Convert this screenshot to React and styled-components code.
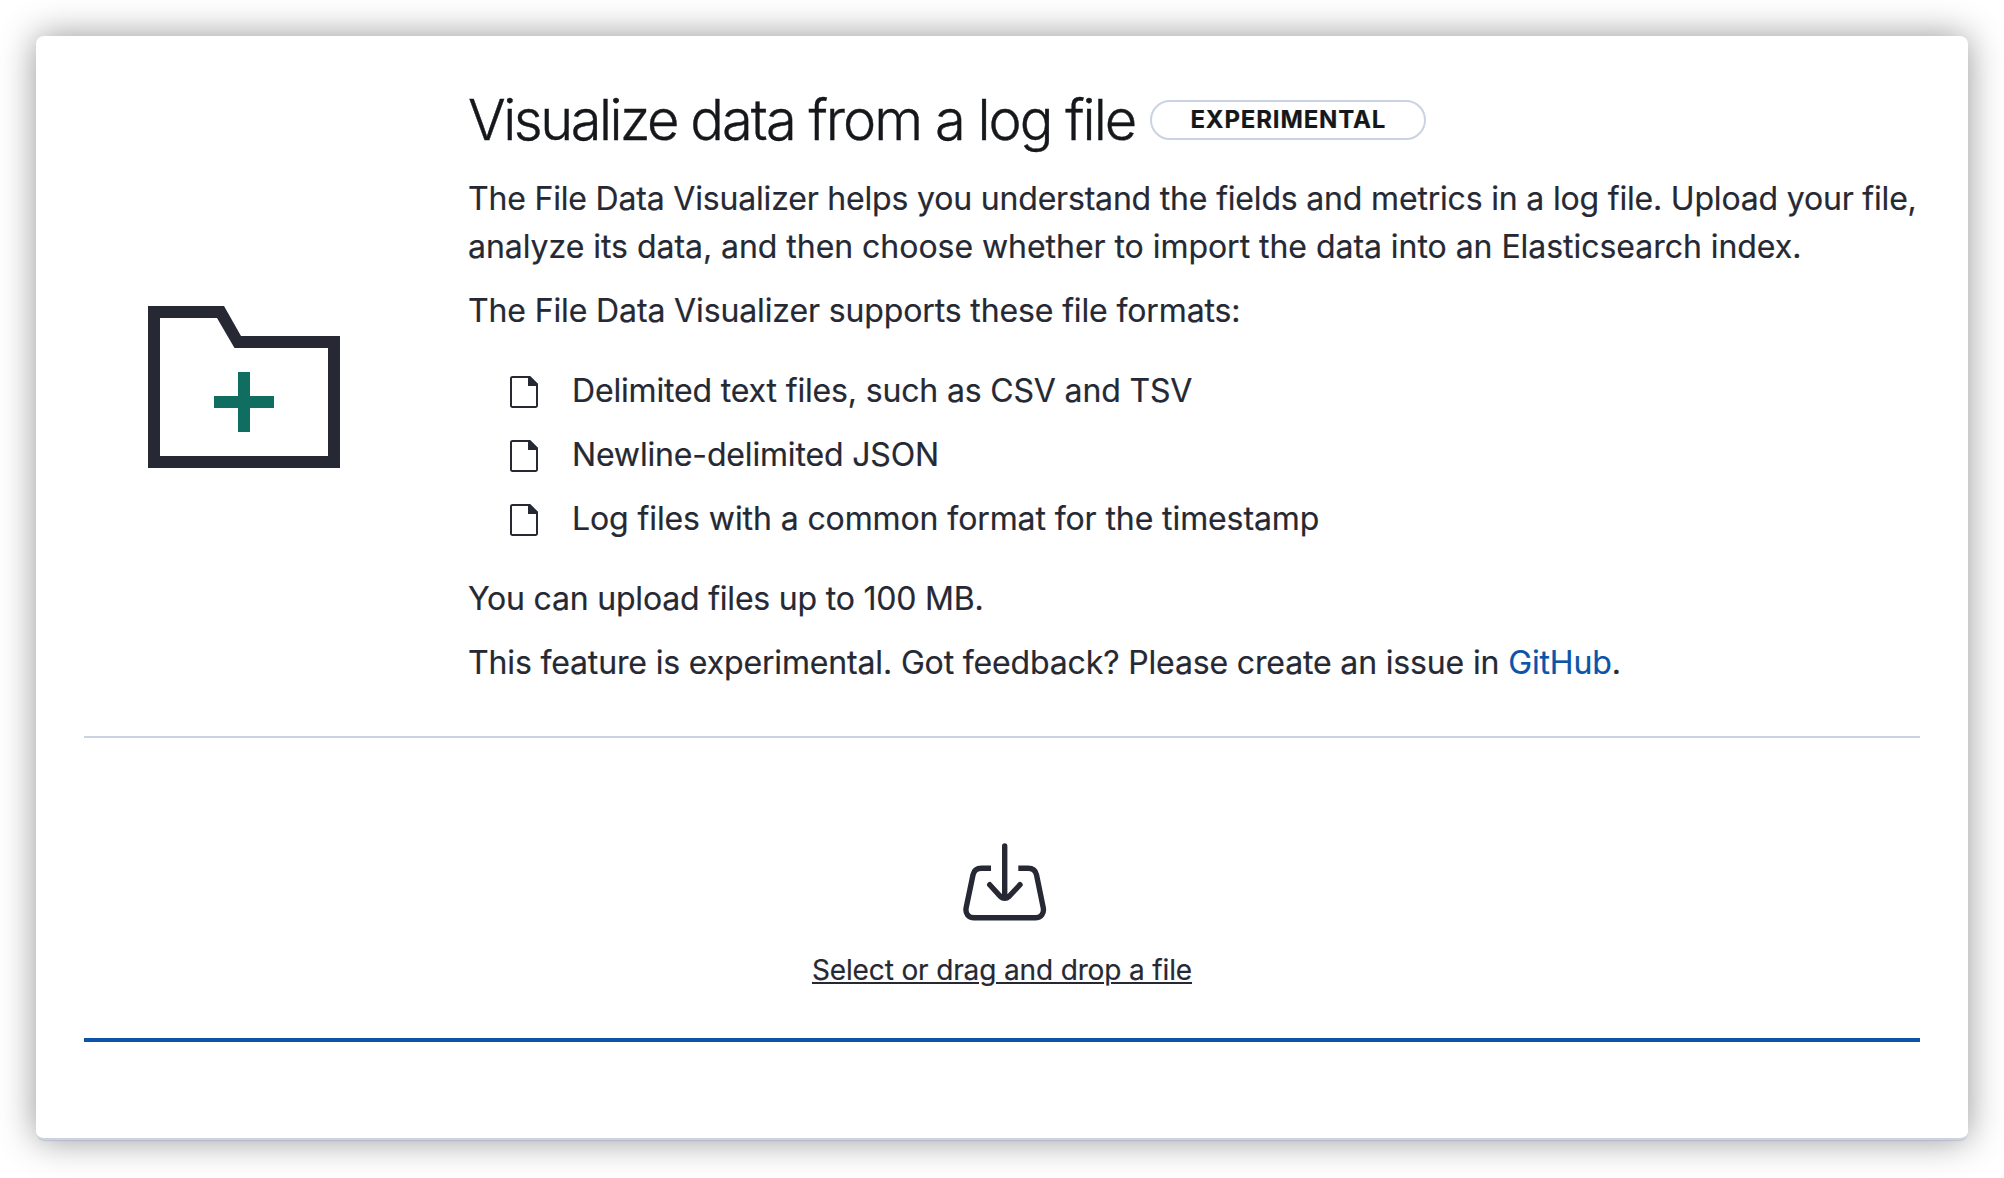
import React from "react";
import styled, { createGlobalStyle } from "styled-components";

const Global = createGlobalStyle`
  * { box-sizing: border-box; }
  body {
    margin: 0; background: #fff; color: #262933;
    font-family: Inter, "Liberation Sans", sans-serif;
  }
  h1, p, ul { margin: 0; padding: 0; }
`;
const Page = styled.main`
  height: 1178px; padding: 36px; overflow: hidden; background: #fff;
`;
const Panel = styled.section`
  height: 1104px; width: 1932px; border-radius: 8px; background: #fff;
  border-bottom: 2px solid #c9d3e2;
  box-shadow: 0 2px 1px -1px rgba(152,162,190,.4), 0 0 36px rgba(0,0,0,.42);
  padding: 48px;
`;
const Intro = styled.div`
  display: grid; grid-template-columns: 320px 1fr; column-gap: 64px; height: 652px;
`;
const Figure = styled.div`
  display: flex; justify-content: center; padding-top: 222px;
`;
const Content = styled.div`
  white-space: nowrap;
  -webkit-text-stroke: 0.2px currentColor;
`;
const Heading = styled.div`
  display: flex; align-items: center; height: 72px; gap: 15px; margin-bottom: 19px;
`;
const Title = styled.h1`
  font-size: 56px; line-height: 72px; font-weight: 300; color: #15171b;
  -webkit-text-stroke: 0.4px currentColor;
`;
const Tracked = styled.span`
  letter-spacing: ${(p) => p.$by}px;
`;
const Badge = styled.span`
  display: inline-flex; width: 276px; height: 40px; justify-content: center; align-items: center;
  border: 2px solid #c9d3e4; border-radius: 20px; font-size: 24px; font-weight: 700; color: #15171b;
  line-height: 34px; padding-bottom: 1px; letter-spacing: 0.85px;
`;
const Text = styled.p`
  font-size: 32px; line-height: 48px; letter-spacing: -0.16px;
  & + & { margin-top: 16px; }
`;
const Link = styled.a`color: #0b54a8; -webkit-text-stroke-color: #0b54a8;`;
const List = styled.ul`
  list-style: none; display: grid; gap: 16px; padding: 32px 0 32px 42px;
`;
const Item = styled.li`
  display: flex; align-items: center; gap: 34px; height: 48px; font-size: 32px; line-height: 48px;
  svg { margin-top: 2px; }
`;
const Drop = styled.button`
  display: flex; flex-direction: column; align-items: center; width: 100%; height: 306px; border: 0;
  border-top: 2px solid #c9d3e2; border-bottom: 4px solid #0b54a8; background: #fff;
  font: inherit; color: inherit; padding: 105px 0 0;
`;
const ImportIcon = styled.svg`margin-left: 6px;`;
const Prompt = styled.span`
  font-size: 28px; line-height: 42px; margin-top: 28px; letter-spacing: -0.14px;
  text-decoration: underline; text-decoration-thickness: 2px; text-underline-offset: 2px;
  -webkit-text-stroke: 0.2px currentColor;
`;

const formats = [
  { label: "Delimited text files, such as CSV and TSV", tracking: -0.16 },
  { label: "Newline-delimited JSON", tracking: -0.16 },
  { label: "Log files with a common format for the timestamp", tracking: -0.1 },
];

export default function App() {
  return <><Global /><Page><Panel>
    <Intro>
      <Figure>
        <svg width="192" height="162" viewBox="0 0 192 162">
          <path d="M0 0h76l17 30h99v132H0zM12 12v138h168V42H86.5L69 12z" fill="#262933" fillRule="evenodd" />
          <path d="M90 66h12v24h24v12h-24v24H90v-24H66V90h24z" fill="#106e61" />
        </svg>
      </Figure>
      <Content>
        <Heading>
          <Title><Tracked $by={-2.5}>Visualize </Tracked><Tracked $by={-1.98}>data from a log file</Tracked></Title>
          <Badge>EXPERIMENTAL</Badge>
        </Heading>
        <Text>
          <Tracked $by={-0.185}>The File Data Visualizer helps you understand the fields and metrics in a log file. Upload your file,</Tracked><br />
          <Tracked $by={-0.04}>analyze its data, and then choose whether to import the data into an Elasticsearch index.</Tracked>
        </Text>
        <Text><Tracked $by={-0.13}>The File Data Visualizer supports these file formats:</Tracked></Text>
        <List>
          {formats.map(({ label, tracking }) => <Item key={label}>
            <svg width="28" height="32" viewBox="0 0 28 32">
              <path d="M2.5 1H19.5L27 8.5V29.5A1.5 1.5 0 0 1 25.5 31H2.5A1.5 1.5 0 0 1 1 29.5V2.5A1.5 1.5 0 0 1 2.5 1z" fill="none" stroke="#262933" strokeWidth="2" />
              <path d="M18 0h2l8 8v2H18z" fill="#262933" />
            </svg>
            <Tracked $by={tracking}>{label}</Tracked>
          </Item>)}
        </List>
        <Text><Tracked $by={-0.2}>You can upload files up to 100 MB.</Tracked></Text>
        <Text><Tracked $by={-0.15}>This feature is experimental. Got feedback? Please create an issue in <Link>GitHub</Link>.</Tracked></Text>
      </Content>
    </Intro>
    <Drop>
      <ImportIcon width="84" height="78" viewBox="0 0 84 78" fill="none" stroke="#262933" strokeWidth="5.4">
        <path d="M28 25.3H18.5c-4.5 0-7.6 2.4-8.5 6.5L3.2 64.5c-1.2 5.8 2 10.2 8 10.2h61c6 0 9.2-4.4 8-10.2L73.5 31.8c-.9-4.1-4-6.5-8.5-6.5H55.3" />
        <path d="M41.7 3v51M26.7 41.7L37.5 53.5c2.5 2.4 5.9 2.4 8.4 0L57 41.7" strokeLinecap="round" />
      </ImportIcon>
      <Prompt>Select or drag and drop a file</Prompt>
    </Drop>
  </Panel></Page></>;
}
